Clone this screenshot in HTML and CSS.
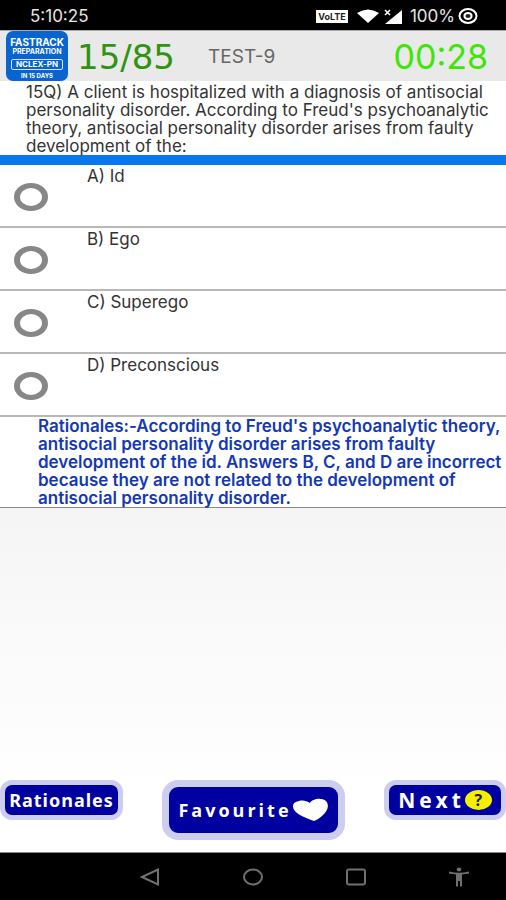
FILE: index.html
```
<!DOCTYPE html>
<html lang="en">
<head>
<meta charset="utf-8">
<meta name="viewport" content="width=device-width, initial-scale=1">
<title>TEST-9</title>
<link rel="stylesheet" href="styles.css">
</head>
<body>
<div class="status">
  <span class="clock">5:10:25</span>
  <span class="volte">VoLTE</span>
  <svg class="wifi" width="24" height="14" viewBox="0 0 24 14" aria-hidden="true"><path d="M1 4Q12-3 23 4L12 14Z" fill="#fff"/></svg>
  <svg class="signal" width="18" height="15" viewBox="0 0 18 15" aria-hidden="true"><path d="M18 1V15H1Z" fill="#fff"/><path d="M1 1L6 6M6 1L1 6" stroke="#fff" stroke-width="1.5"/></svg>
  <span class="battery">100%</span>
  <svg width="20" height="16" viewBox="0 0 20 16" aria-hidden="true"><ellipse cx="10" cy="8" rx="8.500" ry="6.900" fill="none" stroke="#fff" stroke-width="2"/><ellipse cx="10" cy="8" rx="3.600" ry="3" fill="#222" stroke="#fff" stroke-width="2"/></svg>
</div>
<header class="header">
  <div class="logo">
    <span class="logo-name">FASTRACK</span>
    <span class="logo-sub">PREPARATION</span>
    <span class="logo-exam">NCLEX-PN</span>
    <span class="logo-days">IN 15 DAYS</span>
  </div>
  <span class="progress">15/85</span>
  <h1 class="title">TEST-9</h1>
  <span class="timer">00:28</span>
</header>
<main class="main">
  <p class="question">15Q) A client is hospitalized with a diagnosis of antisocial<br>personality disorder. According to Freud's psychoanalytic<br>theory, antisocial personality disorder arises from faulty<br>development of the:</p>
  <div class="options">
    <label class="option"><input type="radio" name="answer"><span>A) Id</span></label>
    <label class="option"><input type="radio" name="answer"><span>B) Ego</span></label>
    <label class="option"><input type="radio" name="answer"><span>C) Superego</span></label>
    <label class="option"><input type="radio" name="answer"><span>D) Preconscious</span></label>
  </div>
  <p class="rationale">Rationales:-According to Freud's psychoanalytic theory,<br>antisocial personality disorder arises from faulty<br>development of the id. Answers B, C, and D are incorrect<br>because they are not related to the development of<br>antisocial personality disorder.</p>
</main>
<div class="actions">
  <button class="action rationales" type="button">Rationales</button>
  <button class="action favourite" type="button">Favourite
    <svg width="37" height="24" viewBox="0 0 37 24" aria-hidden="true"><path d="M22 23C15 20 7 18 3 13C-1 8 1 4 7 3C11 2 15 3 18 5C20 1 29-1 34 3C38 8 35 13 31 17C28 20 25 22 22 23Z" fill="#fff"/></svg>
  </button>
  <button class="action next" type="button">Next<span class="help">?</span></button>
</div>
<nav class="nav">
  <button type="button" aria-label="Back"><svg width="20" height="18" viewBox="0 0 20 18"><path d="M18 1.500V16.500L2 9Z"/></svg></button>
  <button type="button" aria-label="Home"><svg width="22" height="18" viewBox="0 0 22 18"><ellipse cx="11" cy="9" rx="9" ry="7.500"/></svg></button>
  <button type="button" aria-label="Recent apps"><svg width="22" height="18" viewBox="0 0 22 18"><rect x="2" y="1.500" width="18" height="15" rx="2"/></svg></button>
  <button type="button" aria-label="Accessibility"><svg class="person" width="20" height="20" viewBox="0 0 20 20"><ellipse cx="10" cy="2.500" rx="2.300" ry="2"/><path d="M0 4.500Q10 7 20 4.500V6.500L13 7.500V19.500H11V14H9V19.500H7V7.500L0 6.500Z"/></svg></button>
</nav>
</body>
</html>
```
FILE: styles.css
```
* { box-sizing: border-box; }
body {
  margin: 0;
  min-height: 100vh;
  display: flex;
  flex-direction: column;
  background: linear-gradient(#f3f3f3 50%, #fff 88%);
  color: #333;
  font-family: Inter, "Open Sans", sans-serif;
}
button { border: 0; padding: 0; font: inherit; }
.status {
  display: flex;
  align-items: center;
  height: 30px;
  padding: 2px 28px 0 30px;
  background: #000;
  color: #e6e6e6;
  font-size: 17px;
}
.clock { margin-right: auto; }
.volte {
  width: 32px;
  background: #fff;
  color: #222;
  font-size: 9px;
  font-weight: 700;
  line-height: 13px;
  text-align: center;
}
.wifi { margin-left: 8px; }
.signal { margin: 0 8px 0 4px; }
.battery { margin-right: 3px; }
.header {
  display: flex;
  align-items: center;
  height: 51px;
  padding: 0 18px 0 6px;
  border-top: 1px solid #aaa;
  background: #e9e9e9;
}
.logo {
  display: flex;
  flex-direction: column;
  align-items: center;
  width: 62px;
  height: 50px;
  padding-top: 5px;
  border-radius: 7px;
  background: #0865cf;
  color: #fff;
  font-weight: 700;
}
.logo-name { font-size: 10px; line-height: 12px; }
.logo-sub { font-size: 7px; line-height: 8px; }
.logo-exam {
  width: 52px;
  margin: 3px 0;
  border: 1px solid #d5e6fa;
  border-radius: 2px;
  font-size: 8px;
  line-height: 9px;
  text-align: center;
}
.logo-days { font-size: 6px; line-height: 6px; }
.progress, .timer { font-size: 34px; line-height: 40px; }
.progress {
  width: 128px;
  padding: 2px 0 0 9px;
  color: #2f9410;
  font-family: "DejaVu Sans", sans-serif;
}
.title {
  margin: 0 auto 0 12px;
  color: #666;
  font-size: 19px;
  font-weight: 400;
}
.timer { padding-top: 2px; color: #3ce605; }
.question {
  margin: 0;
  padding: 2px 0 0 26px;
  border-bottom: 10px solid #0878f0;
  background: #fff;
  font-size: 17px;
  line-height: 18px;
  white-space: nowrap;
}
.option {
  display: flex;
  height: 63px;
  padding: 0 0 0 14px;
  border-bottom: 2px solid #b8b8b8;
  background: #fff;
  font-size: 17px;
  line-height: 22px;
}
.option input {
  appearance: none;
  flex: none;
  width: 34px;
  height: 28px;
  margin: 18px 39px 0 0;
  border: 6px solid #878787;
  border-width: 5px 6px;
  border-radius: 50%;
}
.rationale {
  margin: 0;
  padding: 0 0 0 38px;
  border-bottom: 1px solid #888;
  background: #fff;
  color: #1438b4;
  font-size: 17px;
  font-weight: 600;
  line-height: 18px;
  white-space: nowrap;
}
.actions {
  display: flex;
  justify-content: space-between;
  align-items: flex-start;
  margin-top: auto;
  padding-bottom: 12px;
}
.action {
  display: flex;
  align-items: center;
  justify-content: center;
  height: 40px;
  border: 5px solid #cdcdf0;
  border-radius: 12px;
  background: #0000a0;
  color: #fff;
  font-family: "Open Sans", sans-serif;
  font-weight: 700;
}
.rationales { width: 123px; font-family: "Noto Sans", sans-serif; font-size: 18px; letter-spacing: 1px; }
.favourite { width: 183px; height: 60px; border-width: 7px; border-radius: 16px; font-size: 18px; letter-spacing: 3px; }
.next { width: 122px; font-size: 21px; letter-spacing: 4px; }
.help {
  width: 27px;
  height: 20px;
  border-radius: 50%;
  background: #f5f000;
  color: #222;
  font-size: 16px;
  line-height: 20px;
  letter-spacing: 0;
}
.nav {
  display: flex;
  justify-content: space-between;
  align-items: center;
  height: 48px;
  padding: 0 37px 0 140px;
  border-top: 1px solid #888;
  background: #000;
}
.nav button { display: flex; background: none; }
.nav svg { fill: none; stroke: #707070; stroke-width: 2; }
.nav .person { fill: #707070; stroke: none; }
```
